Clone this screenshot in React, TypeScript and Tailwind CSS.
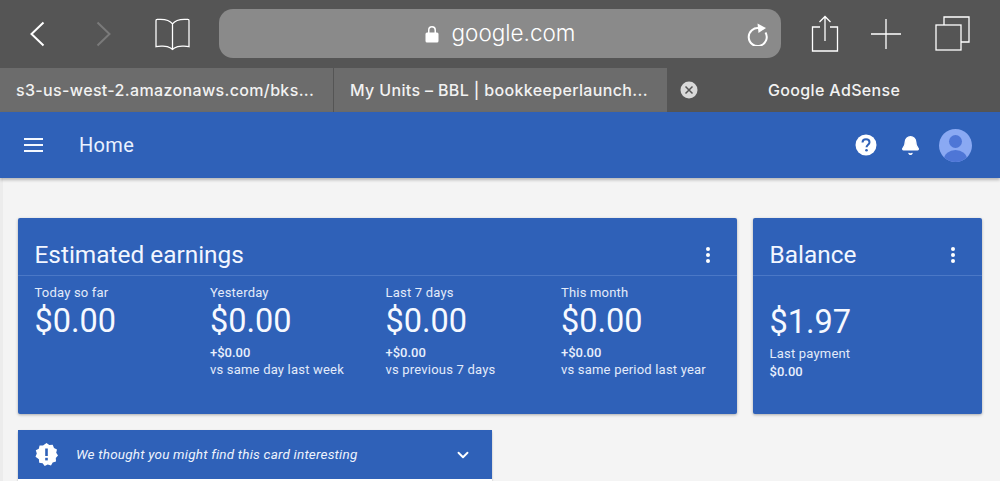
import React from 'react';
import { Bell, ChevronDown } from 'lucide-react';

const stats = [
  { label: 'Today so far', value: '$0.00' },
  { label: 'Yesterday', value: '$0.00', delta: '+$0.00', note: 'vs same day last week' },
  { label: 'Last 7 days', value: '$0.00', delta: '+$0.00', note: 'vs previous 7 days' },
  { label: 'This month', value: '$0.00', delta: '+$0.00', note: 'vs same period last year' },
];

const Dots = () => (
  <svg className="mt-[28px]" width="6" height="18" viewBox="0 0 6 18" fill="white">
    <circle cx="3" cy="3" r="2" />
    <circle cx="3" cy="9" r="2" />
    <circle cx="3" cy="15" r="2" />
  </svg>
);

const BrowserBar = () => (
  <div className="h-[68px] bg-[#555555] flex items-center text-white">
    <div className="w-[219px] flex items-center shrink-0 h-full">
      <svg className="ml-[29px]" width="16" height="26" viewBox="0 0 16 26" fill="none" stroke="white" strokeWidth="2">
        <path d="M14.500 1.500 2.500 13l12 11.500" />
      </svg>
      <svg className="ml-[51px]" width="16" height="26" viewBox="0 0 16 26" fill="none" stroke="#7a7a7a" strokeWidth="2">
        <path d="M1.500 1.500 13.500 13l-12 11.500" />
      </svg>
      <svg className="ml-[43px]" width="35" height="33" viewBox="0 0 36 34" fill="none" stroke="white" strokeWidth="1.300">
        <path d="M18 6C15 2 9 .8 2 1.500c-.6 0-1 .4-1 1v27c3-.6 11-1 15 1.500l2 1.500 2-1.500c4-2.500 12-2.100 15-1.500v-27c0-.6-.4-1-1-1C27 .8 21 2 18 6Zm0 0v26" />
      </svg>
    </div>
    <div className="w-[562px] h-[49px] mb-[1px] rounded-[14px] bg-[#8a8a8a] flex items-center relative justify-center shrink-0">
      <svg className="mr-[13px] mt-[1px]" width="14" height="18" viewBox="0 0 14 18" fill="white">
        <path d="M3 8V5a4 4 0 0 1 8 0v3H9.500V5a2.500 2.500 0 0 0-5 0v3Z" />
        <rect x="0.500" y="7.500" width="13" height="10" rx="1.500" />
      </svg>
      <span className="text-[22.500px] font-['Inter',sans-serif] font-light leading-none">google.com</span>
      <svg className="absolute right-[12px] top-[13px]" width="22" height="24" viewBox="0 0 22 24" fill="none" stroke="white" strokeWidth="2">
        <path d="M17.500 9.500a9 9 0 1 1-6-4.300" transform="translate(1 1)" />
        <path d="M10.500 1.500 19 6l-7.500 5Z" fill="white" stroke="none" />
      </svg>
    </div>
    <div className="flex-1 flex items-center h-full">
      <svg className="ml-[30px]" width="28" height="38" viewBox="0 0 28 38" fill="none" stroke="white" strokeWidth="1.300">
        <path d="M9 12H1.500v24h25V12H19M14 26V1.500M8.500 7 14 1.500 19.500 7" />
      </svg>
      <svg className="ml-[32px]" width="30" height="30" viewBox="0 0 30 30" fill="none" stroke="white" strokeWidth="1.300">
        <path d="M0 15h30M15 0v30" />
      </svg>
      <svg className="ml-[34px]" width="36" height="36" viewBox="0 0 36 36" fill="none" stroke="white" strokeWidth="1.300">
        <rect x="1" y="9" width="25" height="25" />
        <path d="M9 9V1h25v25h-8" />
      </svg>
    </div>
  </div>
);

const TabBar = () => (
  <div className="h-[44px] flex bg-[#555555] text-[#f2f2f2] font-['Inter',sans-serif] font-medium text-[16px] tracking-[0.35px]">
    <div className="w-[333px] bg-[#6c6c6c] pl-[16px] flex items-center whitespace-nowrap">
      <span>s3-us-west-2.amazonaws.com/bks...</span>
    </div>
    <div className="w-[333px] ml-[1px] bg-[#6c6c6c] pl-[16px] flex items-center whitespace-nowrap">
      <span>My Units – BBL | bookkeeperlaunch...</span>
    </div>
    <div className="flex-1 flex items-center">
      <svg className="ml-[13px]" width="18" height="18" viewBox="0 0 18 18">
        <circle cx="9" cy="9" r="8.500" fill="#d9d9d9" />
        <path d="M5.500 5.500l7 7m0-7-7 7" stroke="#555555" strokeWidth="1.500" />
      </svg>
      <span className="ml-[70px]">Google AdSense</span>
    </div>
  </div>
);

const AppHeader = () => (
  <div className="h-[66px] bg-[#2f61b8] shadow-[0_2px_3px_rgba(0,0,0,0.25)] flex items-center text-white font-['Roboto',sans-serif] relative">
    <div className="ml-[24px] w-[19px] flex flex-col gap-[4px]">
      <div className="h-[2px] bg-[#f4f8ff]" />
      <div className="h-[2px] bg-[#f4f8ff]" />
      <div className="h-[2px] bg-[#f4f8ff]" />
    </div>
    <span className="ml-[36px] text-[20px] text-[#eaf2ff] tracking-[0.35px]">Home</span>
    <div className="ml-auto flex items-center mr-[28px]">
      <svg width="22" height="22" viewBox="0 0 22 22">
        <circle cx="11" cy="11" r="10.500" fill="white" />
        <path d="M7.500 8.500C7.500 6.500 9 5.200 11 5.200s3.500 1.300 3.500 3.100c0 2.400-3 2.500-3 5" fill="none" stroke="#2f61b8" strokeWidth="2" />
        <circle cx="11.500" cy="16.300" r="1.300" fill="#2f61b8" />
      </svg>
      <Bell className="ml-[23px]" size={21} fill="white" color="white" strokeWidth={1.500} />
      <svg className="ml-[18px]" width="33" height="33" viewBox="0 0 33 33">
        <defs>
          <clipPath id="avatar">
            <circle cx="16.500" cy="16.500" r="16.500" />
          </clipPath>
        </defs>
        <g clipPath="url(#avatar)">
          <rect width="33" height="33" fill="#8aa9f3" />
          <circle cx="16.500" cy="12.500" r="6.500" fill="#4e76d6" />
          <ellipse cx="16.500" cy="30" rx="11.500" ry="9" fill="#4e76d6" />
        </g>
      </svg>
    </div>
  </div>
);

const EarningsCard = () => (
  <div className="w-[719px] h-[196px] bg-[#2f61b8] rounded-[2px] shadow-[0_1px_3px_rgba(0,0,0,0.3)] text-white">
    <div className="h-[58px] pl-[16.500px] pr-[26px] flex items-start justify-between border-b border-[#4b78c6]">
      <span className="text-[24.400px] leading-[30px] text-[#f2f6ff] mt-[22px]">Estimated earnings</span>
      <Dots />
    </div>
    <div className="pl-[16.500px] grid grid-cols-[175.500px_175.500px_175.500px_175.500px]">
      {stats.map((s) => (
        <div key={s.label}>
          <div className="text-[13px] leading-[16px] text-[#e3ebfa] mt-[9px] tracking-[0.2px]">{s.label}</div>
          <div className="text-[32.500px] leading-[40px] text-[#f6f9ff]">{s.value}</div>
          {s.delta && (
            <>
              <div className="text-[13px] leading-[16px] font-medium text-[#e8effc] mt-[4px]">{s.delta}</div>
              <div className="text-[13px] leading-[18px] text-[#e3ebfa] tracking-[0.2px]">{s.note}</div>
            </>
          )}
        </div>
      ))}
    </div>
  </div>
);

const BalanceCard = () => (
  <div className="w-[229px] h-[196px] ml-[16px] bg-[#2f61b8] rounded-[2px] shadow-[0_1px_3px_rgba(0,0,0,0.3)] text-white">
    <div className="h-[58px] pl-[16.500px] pr-[26px] flex items-start justify-between border-b border-[#4b78c6]">
      <span className="text-[24.400px] leading-[30px] text-[#f2f6ff] mt-[22px]">Balance</span>
      <Dots />
    </div>
    <div className="pl-[16.500px]">
      <div className="text-[32.500px] leading-[40px] mt-[26px] text-[#f6f9ff]">$1.97</div>
      <div className="text-[13px] leading-[18px] mt-[3px] text-[#e3ebfa] tracking-[0.2px]">Last payment</div>
      <div className="text-[13px] leading-[16px] font-medium text-[#e8effc] mt-[1px]">$0.00</div>
    </div>
  </div>
);

export default function App() {
  return (
    <div className="w-[1000px] h-[481px] overflow-hidden bg-[#f4f4f4]">
      <BrowserBar />
      <TabBar />
      <AppHeader />
      <div className="pt-[40px] pl-[15px] border-l-[3px] border-[#ececec] h-full font-['Roboto',sans-serif]">
        <div className="flex">
          <EarningsCard />
          <BalanceCard />
        </div>
        <div className="mt-[16px] w-[474px] bg-white rounded-t-[2px] shadow-[0_1px_2px_rgba(0,0,0,0.3)]">
          <div className="h-[49px] bg-[#2f61b8] flex items-center text-white">
            <svg className="ml-[17px]" width="23" height="23" viewBox="0 0 23 23">
              <path
                fill="white"
                d="M11.500 0l2.800 2 3.400-.3 1.300 3.200 3 1.600-.8 3.300 1.800 2.700-2.200 2.600.2 3.400-3.300 1-1.700 3-3.300-.9-3 1.400-2.100-2.700-3.400-.6-.3-3.400L.5 13.700l1.300-3.100L.8 7.300l3-1.600.8-3.300 3.400 0Z"
              />
              <rect x="10.200" y="5.500" width="2.600" height="7.500" fill="#2f61b8" />
              <rect x="10.200" y="14.800" width="2.600" height="2.600" fill="#2f61b8" />
            </svg>
            <span className="ml-[18px] text-[13.500px] italic text-[#eef3fd] tracking-[0.2px]">We thought you might find this card interesting</span>
            <ChevronDown className="ml-auto mr-[20px]" size={18} strokeWidth={2.500} />
          </div>
          <div className="h-[10px]" />
        </div>
      </div>
    </div>
  );
}
